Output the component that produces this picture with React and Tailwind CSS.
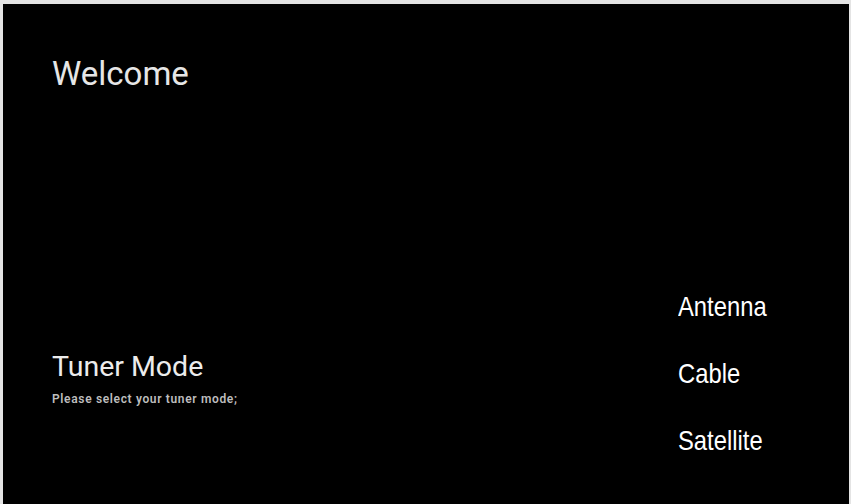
import React from 'react';

const modes = ['Antenna', 'Cable', 'Satellite'];

const App = () => {
  return (
    <div className="h-[504px] w-[851px] bg-[#e4e4e4] pl-[3px] pt-[4px] pr-[2px]">
      <div className="flex h-full flex-col bg-black px-[49px] font-['Roboto',sans-serif]">
        {/* page title */}
        <h1 className="mt-[50px] text-[33px] leading-[40px] text-[#e6e6e6]">Welcome</h1>

        <div className="mt-[179px] flex items-start">
          <div className="mt-[77px] flex-1">
            <h2 className="text-[28.5px] leading-[34px] text-[#ececec]">Tuner Mode</h2>
            <p className="mt-[8px] text-[12px] font-semibold leading-[14px] tracking-[0.65px] text-[#bdbdbd]">
              Please select your tuner mode;
            </p>
          </div>

          <ul className="w-[122px] font-['Liberation_Sans',Arial,sans-serif] text-[28px] leading-[67px] text-white">
            {modes.map((m) => (
              <li key={m} className="origin-left scale-x-[0.85]">
                {m}
              </li>
            ))}
          </ul>
        </div>
      </div>
    </div>
  );
};

export default App;
